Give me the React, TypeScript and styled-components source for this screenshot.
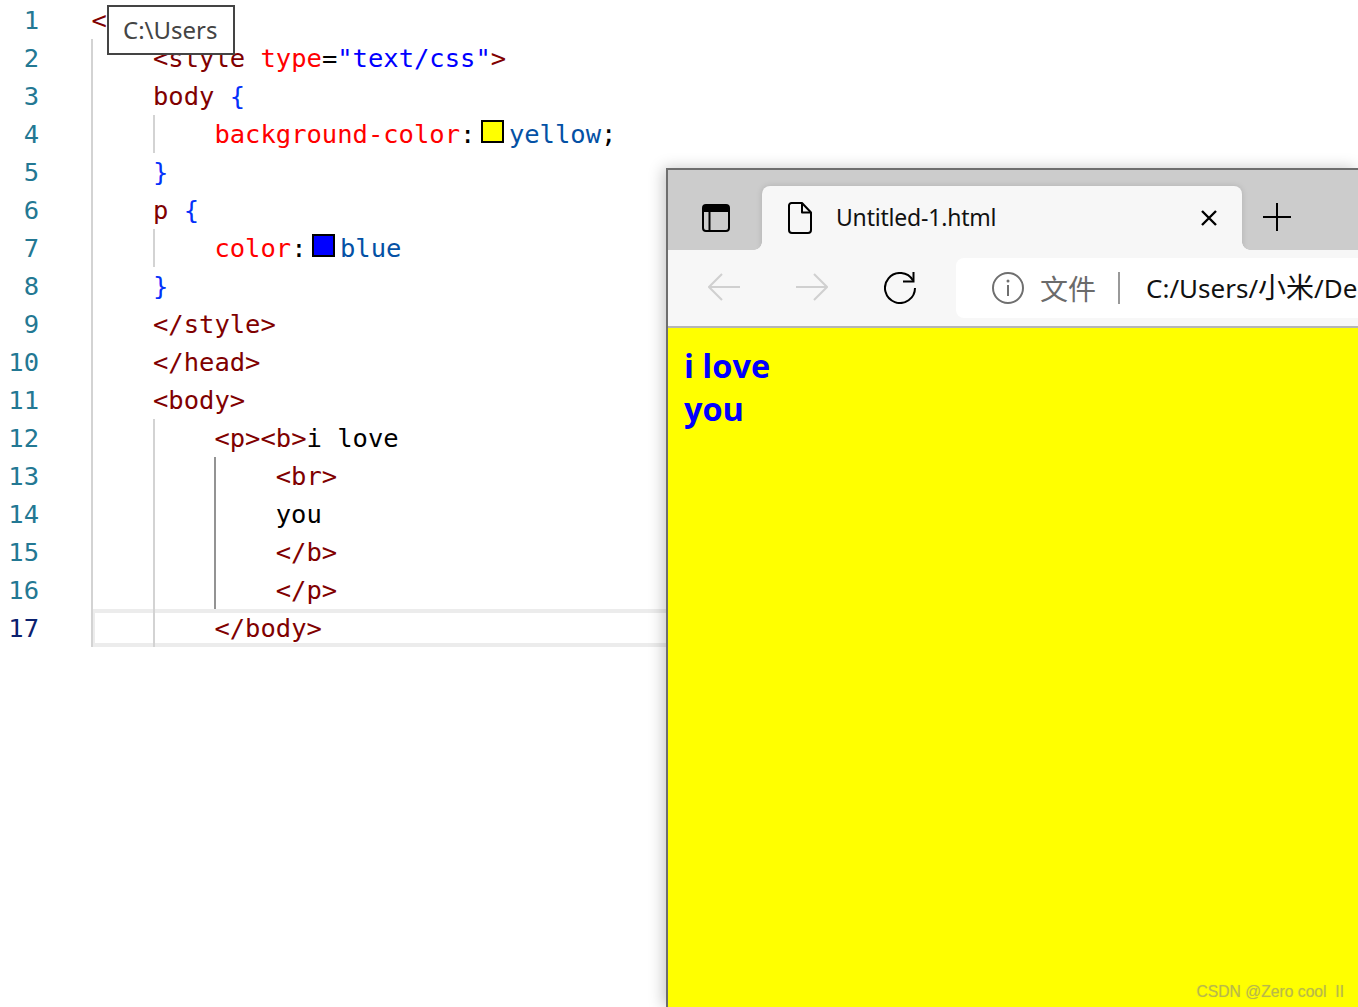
import React from "react";
import styled, { createGlobalStyle } from "styled-components";

const Global = createGlobalStyle`
  html, body { margin: 0; padding: 0; background: #fff; width: 1358px; height: 1007px; overflow: hidden; }
  #root { width: 1358px; height: 1007px; }
`;

const Page = styled.div`
  position: relative;
  width: 1358px;
  height: 1007px;
  overflow: hidden;
  background: #fff;
`;

const Editor = styled.div`
  display: flex;
  flex-direction: column;
  padding-top: 1px;
  font-family: "DejaVu Sans Mono", "Liberation Mono", monospace;
  font-size: 25.5px;
`;

const Row = styled.div`
  display: flex;
  height: 38px;
  line-height: 38px;
  white-space: pre;
`;

const LineNo = styled.div<{ $active?: boolean }>`
  width: 39px;
  margin-right: 52.3px;
  flex: none;
  text-align: right;
  color: ${(p) => (p.$active ? "#0b216f" : "#237893")};
`;

const Body = styled.div<{ $active?: boolean }>`
  flex: 1;
  display: flex;
  height: 38px;
  ${(p) => (p.$active ? "box-shadow: inset 0 4px 0 #ececec, inset 0 -4px 0 #ececec;" : "")}
`;

const Indent = styled.span<{ $guide?: "dim" | "strong"; $inner?: boolean }>`
  flex: none;
  width: 61.4px;
  box-sizing: border-box;
  height: 38px;
  border-left: 2px solid ${(p) => (p.$guide === "strong" ? "#939393" : p.$guide === "dim" ? "#d3d3d3" : "transparent")};
  ${(p) => (p.$inner ? "box-shadow: inset 2px 0 0 #ececec;" : "")}
`;

const Code = styled.span`
  padding-left: 0.3px;
`;

const colors = {
  tag: "#800000",
  attr: "#ff0000",
  str: "#0000ff",
  val: "#0451a5",
  brace: "#0431fa",
  text: "#000000",
};

const Tok = styled.span<{ $k: keyof typeof colors }>`
  color: ${(p) => colors[p.$k]};
`;

const Swatch = styled.span<{ $c: string }>`
  display: inline-block;
  box-sizing: border-box;
  width: 23px;
  height: 23px;
  margin: 0 5px 0 5.5px;
  border: 2px solid #000;
  background: ${(p) => p.$c};
`;

const PathTip = styled.div`
  position: absolute;
  left: 107px;
  top: 5px;
  width: 128px;
  height: 50px;
  box-sizing: border-box;
  border: 2px solid #444;
  background: #fff;
  padding-left: 14px;
  font-family: "Noto Sans", "Open Sans", sans-serif;
  font-size: 24px;
  line-height: 45px;
  color: #444;
`;

const BrowserWindow = styled.div`
  position: absolute;
  left: 666px;
  top: 168px;
  right: 0;
  bottom: 0;
  display: flex;
  flex-direction: column;
  border-top: 2px solid #6e6e6e;
  border-left: 2px solid #6e6e6e;
  box-shadow: -3px 0 14px rgba(0, 0, 0, 0.22);
`;

const TabBar = styled.div`
  display: flex;
  height: 80px;
  flex: none;
  background: #cccccc;
  overflow: hidden;
`;

const PanelSlot = styled.div`
  width: 94px;
  flex: none;
  display: flex;
  align-items: flex-start;
  padding: 34px 0 0 34px;
  box-sizing: border-box;
`;

const Tab = styled.div`
  position: relative;
  width: 480px;
  flex: none;
  margin-top: 16px;
  height: 64px;
  display: flex;
  align-items: flex-start;
  box-sizing: border-box;
  padding: 16px 25px 0 26px;
  background: #f7f7f7;
  border-radius: 8px 8px 0 0;
  box-shadow: 0 0 6px rgba(0, 0, 0, 0.14);
  font-family: "Noto Sans", "Open Sans", sans-serif;
  font-size: 23px;
  letter-spacing: -0.2px;
  line-height: 31px;
  color: #111;

  &::before,
  &::after {
    content: "";
    position: absolute;
    bottom: 0;
    width: 8px;
    height: 8px;
  }
  &::before {
    left: -8px;
    background: radial-gradient(circle at 0 0, transparent 7.5px, #f7f7f7 8px);
  }
  &::after {
    right: -8px;
    background: radial-gradient(circle at 100% 0, transparent 7.5px, #f7f7f7 8px);
  }
`;

const TabTitle = styled.span`
  flex: 1;
  margin-left: 24px;
`;

const TabClose = styled.svg`
  flex: none;
  margin-top: 8px;
`;

const PlusSlot = styled.div`
  flex: none;
  padding: 33px 0 0 21px;
`;

const Toolbar = styled.div`
  display: flex;
  height: 78px;
  flex: none;
  box-sizing: border-box;
  padding: 8px 0 0 40px;
  background: #f7f7f7;
  border-bottom: 2px solid #b5b5b5;
  overflow: hidden;
`;

const NavIcon = styled.svg<{ $gap: number; $top: number }>`
  flex: none;
  margin: ${(p) => p.$top}px ${(p) => p.$gap}px 0 0;
`;

const Address = styled.div`
  flex: 1;
  height: 60px;
  min-width: 0;
  display: flex;
  align-items: center;
  box-sizing: border-box;
  padding-left: 36px;
  background: #fff;
  border-radius: 8px 0 0 8px;
  white-space: nowrap;
  overflow: hidden;
  font-family: "Noto Sans", "Noto Sans CJK SC", sans-serif;
  font-size: 26px;
`;

const InfoIcon = styled.svg`
  flex: none;
`;

const Scheme = styled.span`
  flex: none;
  margin-left: 16px;
  font-family: "Noto Sans CJK SC", sans-serif;
  font-size: 28px;
  color: #6b6b6b;
`;

const Divider = styled.span`
  flex: none;
  width: 2px;
  height: 32px;
  margin: 0 26px 0 22px;
  background: #999;
`;

const Url = styled.span`
  flex: none;
  margin-top: -4px;
  color: #111;
`;

const UrlCjk = styled.span`
  font-family: "Noto Sans CJK SC", sans-serif;
  font-size: 28px;
`;

const Viewport = styled.div`
  flex: 1;
  background: #ffff00;
  padding: 16px;
  font-family: "Open Sans", "Noto Sans", sans-serif;
  font-size: 32.5px;
  font-weight: 700;
  line-height: 43px;
  color: #0000ff;
`;

const Watermark = styled.div`
  position: absolute;
  right: 14px;
  bottom: 5px;
  font-family: "Liberation Sans", Arial, sans-serif;
  font-size: 15.7px;
  line-height: 20px;
  white-space: pre;
  color: #b9b94a;
  text-shadow: 0 0 1px rgba(150, 150, 90, 0.35);
`;

type K = keyof typeof colors;
type T = [K, string];
type Line = { guides: ("dim" | "strong" | null)[]; toks: React.ReactNode };

const t = (k: K, s: string, key?: number) => (
  <Tok $k={k} key={key}>
    {s}
  </Tok>
);
const seq = (arr: T[]) => arr.map(([k, s], i) => t(k, s, i));

const lines: Line[] = [
  { guides: [], toks: seq([["tag", "<head>"]]) },
  { guides: ["dim"], toks: seq([["tag", "<style "], ["attr", "type"], ["text", "="], ["str", '"text/css"'], ["tag", ">"]]) },
  { guides: ["dim"], toks: seq([["tag", "body "], ["brace", "{"]]) },
  {
    guides: ["dim", "dim"],
    toks: (
      <>
        {t("attr", "background-color")}
        {t("text", ":")}
        <Swatch $c="#ffff00" />
        {t("val", "yellow")}
        {t("text", ";")}
      </>
    ),
  },
  { guides: ["dim"], toks: seq([["brace", "}"]]) },
  { guides: ["dim"], toks: seq([["tag", "p "], ["brace", "{"]]) },
  {
    guides: ["dim", "dim"],
    toks: (
      <>
        {t("attr", "color")}
        {t("text", ":")}
        <Swatch $c="#0000ff" />
        {t("val", "blue")}
      </>
    ),
  },
  { guides: ["dim"], toks: seq([["brace", "}"]]) },
  { guides: ["dim"], toks: seq([["tag", "</style>"]]) },
  { guides: ["dim"], toks: seq([["tag", "</head>"]]) },
  { guides: ["dim"], toks: seq([["tag", "<body>"]]) },
  { guides: ["dim", "dim"], toks: seq([["tag", "<p><b>"], ["text", "i love"]]) },
  { guides: ["dim", "dim", "strong"], toks: seq([["tag", "<br>"]]) },
  { guides: ["dim", "dim", "strong"], toks: seq([["text", "you"]]) },
  { guides: ["dim", "dim", "strong"], toks: seq([["tag", "</b>"]]) },
  { guides: ["dim", "dim", "strong"], toks: seq([["tag", "</p>"]]) },
  { guides: ["dim", "dim"], toks: seq([["tag", "</body>"]]) },
];

export default function App() {
  return (
    <Page>
      <Global />
      <Editor>
        {lines.map((l, i) => {
          const active = i === lines.length - 1;
          return (
            <Row key={i}>
              <LineNo $active={active}>{i + 1}</LineNo>
              <Body $active={active}>
                {l.guides.map((g, j) => (
                  <Indent key={j} $guide={g ?? undefined} $inner={active && j === 0} />
                ))}
                <Code>{l.toks}</Code>
              </Body>
            </Row>
          );
        })}
      </Editor>
      <PathTip>C:\Users</PathTip>
      <BrowserWindow>
        <TabBar>
          <PanelSlot>
            <svg width="28" height="28" viewBox="0 0 28 28" fill="none">
              <rect x="1" y="1" width="26" height="26" rx="3" stroke="#000" strokeWidth="2" />
              <path d="M1 4a3 3 0 0 1 3-3h20a3 3 0 0 1 3 3v4H1z" fill="#000" />
              <path d="M7.5 8v19" stroke="#000" strokeWidth="2" />
            </svg>
          </PanelSlot>
          <Tab>
            <svg width="24" height="32" viewBox="0 0 24 32" fill="none">
              <path
                d="M3.5 1H14l9 9.5V28a3 3 0 0 1-3 3H4a3 3 0 0 1-3-3V3.5A2.5 2.5 0 0 1 3.5 1z"
                stroke="#000"
                strokeWidth="2"
                strokeLinejoin="round"
              />
              <path d="M14 1v9.5h9" stroke="#000" strokeWidth="2" strokeLinejoin="round" />
            </svg>
            <TabTitle>Untitled-1.html</TabTitle>
            <TabClose width="16" height="16" viewBox="0 0 16 16" fill="none">
              <path d="M1 1l14 14M15 1L1 15" stroke="#000" strokeWidth="2.4" />
            </TabClose>
          </Tab>
          <PlusSlot>
            <svg width="28" height="28" viewBox="0 0 28 28" fill="none">
              <path d="M14 0v28M0 14h28" stroke="#000" strokeWidth="2" />
            </svg>
          </PlusSlot>
        </TabBar>
        <Toolbar>
          <NavIcon $gap={56} $top={15} width="32" height="28" viewBox="0 0 32 28" fill="none">
            <path d="M32 14H1M14 1L1 14l13 13" stroke="#d0d0d0" strokeWidth="2" />
          </NavIcon>
          <NavIcon $gap={56} $top={15} width="32" height="28" viewBox="0 0 32 28" fill="none">
            <path d="M0 14h31M18 1l13 13-13 13" stroke="#d0d0d0" strokeWidth="2" />
          </NavIcon>
          <NavIcon $gap={40} $top={14} width="32" height="32" viewBox="0 0 32 32" fill="none">
            <path d="M29 8.5A15 15 0 1 0 31 16" stroke="#000" strokeWidth="2" />
            <path d="M19 9.5h10.5V0" stroke="#000" strokeWidth="2" />
          </NavIcon>
          <Address>
            <InfoIcon width="32" height="32" viewBox="0 0 32 32" fill="none">
              <circle cx="16" cy="16" r="15" stroke="#6f6f6f" strokeWidth="2" />
              <path d="M16 13v11" stroke="#6f6f6f" strokeWidth="2" />
              <circle cx="16" cy="9" r="1.5" fill="#6f6f6f" />
            </InfoIcon>
            <Scheme>文件</Scheme>
            <Divider />
            <Url>
              C:/Users/<UrlCjk>小米</UrlCjk>/De
            </Url>
          </Address>
        </Toolbar>
        <Viewport>
          i love
          <br />
          you
        </Viewport>
      </BrowserWindow>
      <Watermark>CSDN @Zero cool  II</Watermark>
    </Page>
  );
}
